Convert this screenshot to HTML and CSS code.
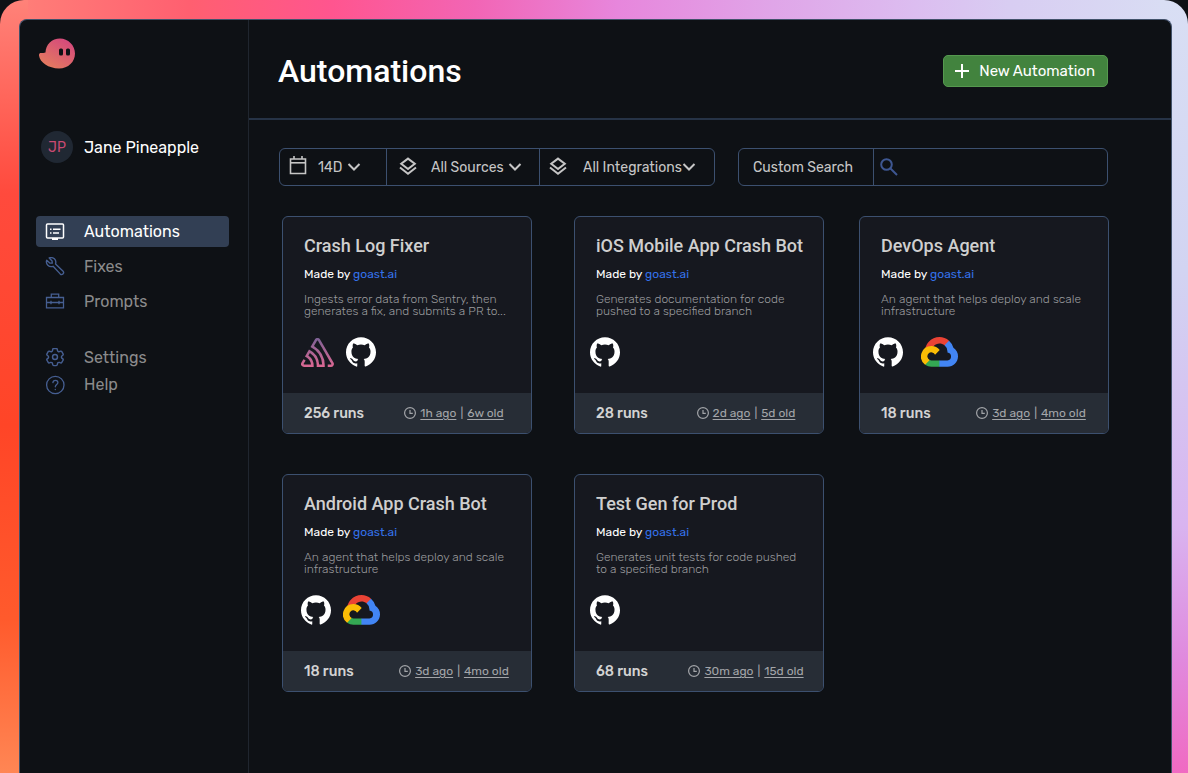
FILE: index.html
```html
<!DOCTYPE html>
<html lang="en">
<head>
    <meta charset="UTF-8">
    <meta name="viewport" content="width=device-width, initial-scale=1.0">
    <title>Automations</title>
    <link rel="stylesheet" href="styles.css">
</head>
<body>
    <svg class="sprite" aria-hidden="true">
        <defs>
            <linearGradient id="logo-fill" x1="0" y1="1" x2="0.7" y2="0">
                <stop offset="0" stop-color="#e6835a"/>
                <stop offset="1" stop-color="#d54a7c"/>
            </linearGradient>
            <linearGradient id="sentry-fill" x1="0" y1="0" x2="0" y2="1">
                <stop offset="0" stop-color="#7d6296"/>
                <stop offset="1" stop-color="#dc6792"/>
            </linearGradient>
        </defs>
        <symbol id="github" viewBox="0 0 24 24">
            <path fill="#fff" d="M12 .297c-6.63 0-12 5.373-12 12 0 5.303 3.438 9.8 8.205 11.385.6.113.82-.258.82-.577 0-.285-.01-1.04-.015-2.04-3.338.724-4.042-1.61-4.042-1.61C4.422 18.07 3.633 17.7 3.633 17.7c-1.087-.744.084-.729.084-.729 1.205.084 1.838 1.236 1.838 1.236 1.07 1.835 2.809 1.305 3.495.998.108-.776.417-1.305.76-1.605-2.665-.3-5.466-1.332-5.466-5.93 0-1.31.465-2.38 1.235-3.22-.135-.303-.54-1.523.105-3.176 0 0 1.005-.322 3.3 1.23.96-.267 1.98-.399 3-.405 1.02.006 2.04.138 3 .405 2.28-1.552 3.285-1.23 3.285-1.23.645 1.653.24 2.873.12 3.176.765.84 1.23 1.91 1.23 3.22 0 4.61-2.805 5.625-5.475 5.92.42.36.81 1.096.81 2.22 0 1.606-.015 2.896-.015 3.286 0 .315.21.69.825.57C20.565 22.092 24 17.592 24 12.297c0-6.627-5.373-12-12-12"/>
        </symbol>
        <symbol id="gcp" viewBox="0 0 256 206">
            <path fill="#ea4335" d="M170.25 56.82l22.25-22.25 1.49-9.37C153.44-11.68 88.98-7.5 52.42 33.92 42.27 45.42 34.73 59.76 30.72 74.57l7.97-1.12 44.5-7.34 3.44-3.51c19.8-21.74 53.27-24.67 76.13-6.17z"/>
            <path fill="#4285f4" d="M224.2 73.92a100.25 100.25 0 0 0-30.21-48.72l-31.23 31.23a55.52 55.52 0 0 1 20.38 44.04v5.54a27.8 27.8 0 0 1 0 55.28h-55.68l-5.46 5.93v33.34l5.46 5.24h55.68c39.93.3 72.55-31.5 72.86-71.43a72.32 72.32 0 0 0-31.8-60.45"/>
            <path fill="#34a853" d="M71.87 205.8h55.59v-44.51H71.87a27.28 27.28 0 0 1-11.4-2.5l-7.89 2.42-22.4 22.25-1.96 7.58a72 72 0 0 0 43.65 14.76"/>
            <path fill="#fbbc05" d="M71.87 61.43A72.3 72.3 0 0 0 28.22 191.04l32.25-32.25a27.8 27.8 0 1 1 36.78-36.77l32.24-32.25a72.22 72.22 0 0 0-57.62-28.34"/>
        </symbol>
        <symbol id="clock" viewBox="0 0 12 12">
            <path fill="none" stroke="currentColor" stroke-width="1.200" d="M6 .6a5.400 5.400 0 1 1 0 10.800a5.400 5.400 0 0 1 0-10.800M6 3v3.400h2.800"/>
        </symbol>
        <symbol id="chevron" viewBox="0 0 14 14">
            <path fill="none" stroke="currentColor" stroke-width="2" d="M1.500 4l5.500 5.500L12.500 4"/>
        </symbol>
        <symbol id="layers" viewBox="0 0 18 18">
            <path fill="none" stroke="currentColor" stroke-width="2" d="M9 1.600l6.800 5.200L9 12.100 2.200 6.800zM1 10.500l8 6.200 8-6.200"/>
        </symbol>
    </svg>

    <div class="frame">
        <div class="app">
            <aside class="sidebar">
                <svg class="logo" viewBox="0 0 36 31">
                    <path fill="url(#logo-fill)" d="M6.500 14.600C6.600 6.600 13 .5 21 .5s15 6.700 15 15-6.700 15-16 15C9.500 30.500.8 24.500 0 17.600c-.1-2 .7-2.700 2-2.700 1.800 0 3 .3 4.500-.3z"/>
                    <rect fill="#0e1115" x="20" y="10.500" width="4" height="7" rx="1.500"/>
                    <rect fill="#0e1115" x="27" y="10.500" width="4" height="7" rx="1.500"/>
                </svg>

                <div class="user">
                    <span class="avatar">JP</span>
                    <span>Jane Pineapple</span>
                </div>

                <nav class="nav">
                    <a class="nav-item active" href="#">
                        <svg viewBox="0 0 20 20" fill="none" stroke="currentColor"><rect x="1.500" y="2" width="17" height="14" rx="1" stroke-width="1.500"/><path stroke-width="1.500" d="M5 7.200h1.500M8 7.200h7.500M5 11h1.500M8 11h6"/><path stroke-width="2" d="M7 17h6"/></svg>
                        Automations
                    </a>
                    <a class="nav-item" href="#">
                        <svg viewBox="1 2 22 22" fill="none" stroke="currentColor" stroke-width="1.500" stroke-linejoin="round"><path transform="matrix(-1 0 0 1 24 0)" d="M15.200 6.400l-.2 2.300 2.500.1 3.600-3.200c1.500 4.200-2.500 8.300-7 6.600L6.300 20.600c-2 2-5-.7-3.200-3l8.300-8C10 5 13.800 1.600 18.400 3z"/></svg>
                        Fixes
                    </a>
                    <a class="nav-item" href="#">
                        <svg viewBox="0 0 20 20" fill="none" stroke="currentColor" stroke-width="1.300"><path d="M1.500 5.500h17v10.300h-17zM6.300 5.500V2.200h7.400v3.300M1.500 10.500h17M6 8.800v3.400M14 8.800v3.400"/></svg>
                        Prompts
                    </a>
                    <a class="nav-item small first" href="#">
                        <svg viewBox="1.500 2.500 21 21" fill="none" stroke="currentColor" stroke-width="1.500" stroke-linecap="round" stroke-linejoin="round"><path d="M9.594 3.940c.09-.542.560-.940 1.110-.940h2.593c.55 0 1.020.398 1.110.940l.213 1.281c.063.374.313.686.645.870.074.040.147.083.220.127.325.196.720.257 1.075.124l1.217-.456a1.125 1.125 0 0 1 1.370.490l1.296 2.247a1.125 1.125 0 0 1-.260 1.431l-1.003.827c-.293.241-.438.613-.430.992a7 7 0 0 1 0 .255c-.008.378.137.750.430.991l1.004.827c.424.350.534.955.260 1.430l-1.298 2.247a1.125 1.125 0 0 1-1.369.491l-1.217-.456c-.355-.133-.750-.072-1.076.124a6 6 0 0 1-.220.128c-.331.183-.581.495-.644.869l-.213 1.281c-.090.543-.560.940-1.110.940h-2.594c-.550 0-1.019-.398-1.110-.940l-.213-1.281c-.062-.374-.312-.686-.644-.870a6 6 0 0 1-.220-.127c-.325-.196-.720-.257-1.076-.124l-1.217.456a1.125 1.125 0 0 1-1.369-.490l-1.297-2.247a1.125 1.125 0 0 1 .260-1.431l1.004-.827c.292-.240.437-.613.430-.991a7 7 0 0 1 0-.255c.007-.380-.138-.751-.430-.992l-1.004-.827a1.125 1.125 0 0 1-.260-1.430l1.297-2.247a1.125 1.125 0 0 1 1.370-.491l1.216.456c.356.133.751.072 1.076-.124.072-.044.146-.086.220-.128.332-.183.582-.495.644-.869z"/><circle cx="12" cy="12" r="2.600"/></svg>
                        Settings
                    </a>
                    <a class="nav-item small" href="#">
                        <svg viewBox="0 0 20 20" fill="none" stroke="currentColor" stroke-width="1.300" stroke-linecap="round"><circle cx="10.300" cy="10" r="8.700"/><path d="M7.900 7.600c.2-3.100 5-3 5 0 0 1.900-2.500 1.900-2.600 4.200M10.300 14.300v.3"/></svg>
                        Help
                    </a>
                </nav>
            </aside>

            <main class="main">
                <header class="header">
                    <h1>Automations</h1>
                    <button class="new-btn" type="button">
                        <svg viewBox="0 0 14 14"><path stroke="#fff" stroke-width="2" d="M7 0v14M0 7h14"/></svg>
                        New Automation
                    </button>
                </header>

                <div class="toolbar">
                    <div class="filters">
                        <label class="filter">
                            <svg class="filter-icon" viewBox="0 0 18 18" fill="none" stroke="currentColor"><path stroke-width="1.600" d="M1.500 2h15v14.500h-15zM5 2V-1M13 2V-1"/><path stroke-width="1.600" d="M1.500 5.800h15"/></svg>
                            <select class="filter-select" aria-label="Period"><option>14D</option></select>
                            <svg class="chevron"><use href="#chevron"/></svg>
                        </label>
                        <label class="filter wide">
                            <svg class="filter-icon"><use href="#layers"/></svg>
                            <select class="filter-select" aria-label="Sources"><option>All Sources</option></select>
                            <svg class="chevron"><use href="#chevron"/></svg>
                        </label>
                        <label class="filter widest">
                            <svg class="filter-icon"><use href="#layers"/></svg>
                            <select class="filter-select" aria-label="Integrations"><option>All Integrations</option></select>
                            <svg class="chevron"><use href="#chevron"/></svg>
                        </label>
                    </div>
                    <div class="search">
                        <label class="search-label" for="search">Custom Search</label>
                        <svg class="search-icon" viewBox="0 0 18 18" fill="none" stroke="currentColor" stroke-width="2"><circle cx="6.500" cy="6.500" r="5.300"/><path d="M10.500 10.500l6.500 6.500"/></svg>
                        <input class="search-input" id="search" type="text">
                    </div>
                </div>

                <section class="cards">
                    <article class="card">
                        <div class="card-body">
                            <h2>Crash Log Fixer</h2>
                            <p class="author">Made by <a href="#">goast.ai</a></p>
                            <p class="desc">Ingests error data from Sentry, then generates a fix, and submits a PR to...</p>
                        </div>
                        <div class="tools indent">
                            <svg class="sentry" viewBox="0 1.400 24 21.200"><path fill="url(#sentry-fill)" d="M13.910 2.505c-.873-1.448-2.972-1.448-3.844 0L6.904 7.920a15.478 15.478 0 0 1 8.530 12.811h-2.221A13.301 13.301 0 0 0 5.784 9.814l-2.926 5.060a7.650 7.650 0 0 1 4.435 5.848H2.194a.365.365 0 0 1-.298-.534l1.413-2.402a5.160 5.160 0 0 0-1.614-.913L.296 19.275a2.182 2.182 0 0 0 .812 2.999 2.240 2.240 0 0 0 1.086.288h6.983a9.322 9.322 0 0 0-3.845-8.318l1.110-1.922a11.470 11.470 0 0 1 4.950 10.240h5.915a17.242 17.242 0 0 0-7.885-15.280l2.244-3.845a.370.370 0 0 1 .504-.130c.255.140 9.750 16.708 9.928 16.900a.365.365 0 0 1-.327.543h-2.287c.029.612.029 1.223 0 1.831h2.297a2.206 2.206 0 0 0 1.922-3.310z"/></svg>
                            <svg class="github"><use href="#github"/></svg>
                        </div>
                        <div class="card-footer">
                            <strong>256 runs</strong>
                            <div class="times"><svg><use href="#clock"/></svg><u>1h ago</u><span>|</span><u>6w old</u></div>
                        </div>
                    </article>

                    <article class="card">
                        <div class="card-body">
                            <h2>iOS Mobile App Crash Bot</h2>
                            <p class="author">Made by <a href="#">goast.ai</a></p>
                            <p class="desc">Generates documentation for code pushed to a specified branch</p>
                        </div>
                        <div class="tools">
                            <svg class="github"><use href="#github"/></svg>
                        </div>
                        <div class="card-footer">
                            <strong>28 runs</strong>
                            <div class="times"><svg><use href="#clock"/></svg><u>2d ago</u><span>|</span><u>5d old</u></div>
                        </div>
                    </article>

                    <article class="card">
                        <div class="card-body">
                            <h2>DevOps Agent</h2>
                            <p class="author">Made by <a href="#">goast.ai</a></p>
                            <p class="desc">An agent that helps deploy and scale infrastructure</p>
                        </div>
                        <div class="tools spaced">
                            <svg class="github"><use href="#github"/></svg>
                            <svg class="gcp"><use href="#gcp"/></svg>
                        </div>
                        <div class="card-footer">
                            <strong>18 runs</strong>
                            <div class="times"><svg><use href="#clock"/></svg><u>3d ago</u><span>|</span><u>4mo old</u></div>
                        </div>
                    </article>

                    <article class="card">
                        <div class="card-body">
                            <h2>Android App Crash Bot</h2>
                            <p class="author">Made by <a href="#">goast.ai</a></p>
                            <p class="desc">An agent that helps deploy and scale infrastructure</p>
                        </div>
                        <div class="tools indent">
                            <svg class="github"><use href="#github"/></svg>
                            <svg class="gcp"><use href="#gcp"/></svg>
                        </div>
                        <div class="card-footer">
                            <strong>18 runs</strong>
                            <div class="times"><svg><use href="#clock"/></svg><u>3d ago</u><span>|</span><u>4mo old</u></div>
                        </div>
                    </article>

                    <article class="card">
                        <div class="card-body">
                            <h2>Test Gen for Prod</h2>
                            <p class="author">Made by <a href="#">goast.ai</a></p>
                            <p class="desc">Generates unit tests for code pushed to a specified branch</p>
                        </div>
                        <div class="tools">
                            <svg class="github"><use href="#github"/></svg>
                        </div>
                        <div class="card-footer">
                            <strong>68 runs</strong>
                            <div class="times"><svg><use href="#clock"/></svg><u>30m ago</u><span>|</span><u>15d old</u></div>
                        </div>
                    </article>
                </section>
            </main>
        </div>
    </div>
</body>
</html>
```
FILE: styles.css
```css
* {
    box-sizing: border-box;
}
body {
    margin: 0;
    background: #0e1115;
    color: #fff;
    font-family: Rubik, Inter, "Liberation Sans", sans-serif;
    font-size: 14px;
}
h1, h2, p {
    margin: 0;
}
a {
    color: inherit;
    text-decoration: none;
}
svg {
    flex: none;
}
.sprite {
    position: absolute;
    width: 0;
    height: 0;
}

/* gradient frame around the app window */
.frame {
    display: flex;
    min-height: 100vh;
    padding: 19px 16px 0 19px;
    border-radius: 24px 24px 0 0;
    background:
        linear-gradient(to bottom, #ff8279, #ff4a3d 25%, #ff4527 55%, #ff5a2c 80%, #ff8654) left / 28px 100% no-repeat,
        linear-gradient(to bottom, #d9dff4, #d2d4f2 35%, #d9b4f0 68%, #e08ade 85%, #f06ac2) right / 28px 100% no-repeat,
        linear-gradient(to right, #ff8279, #ff5f70 16%, #ff558f 28%, #f265b5 40%, #e786dc 52%, #e0a5e8 65%, #dcbdf0 77%, #d8cdf2 85%, #d9dff4);
}
.app {
    display: flex;
    flex: 1;
    min-width: 0;
    border: 1px solid #42526b;
    border-bottom: 0;
    border-radius: 8px 8px 0 0;
    background: #0e1115;
}

.sidebar {
    flex: none;
    width: 229px;
    padding: 18px 19px 0 16px;
    border-right: 1px solid #20262f;
}
.logo {
    display: block;
    width: 36px;
    height: 31px;
    margin-left: 3px;
}
.user {
    display: flex;
    align-items: center;
    gap: 11px;
    margin: 62px 0 53px 5px;
    font-size: 16px;
}
.avatar {
    display: flex;
    align-items: center;
    justify-content: center;
    width: 32px;
    height: 32px;
    border-radius: 50%;
    background: #202833;
    color: #c84a72;
    font-size: 14px;
}
.nav {
    display: flex;
    flex-direction: column;
}
.nav-item {
    display: flex;
    align-items: center;
    gap: 19px;
    height: 31px;
    margin-bottom: 4px;
    padding-left: 9px;
    border-radius: 4px;
    color: #8b8b8c;
    font-size: 16px;
}
.nav-item svg {
    width: 20px;
    height: 20px;
    color: #465f92;
}
.nav-item.active {
    background: #323f54;
    color: #fff;
}
.nav-item.active svg {
    color: #fff;
}
.nav-item.small {
    height: 27px;
    margin-bottom: 0;
}
.nav-item.first {
    margin-top: 23px;
}

.main {
    flex: 1;
    min-width: 0;
}
.header {
    display: flex;
    align-items: center;
    justify-content: space-between;
    height: 100px;
    padding: 3px 63px 0 29px;
    border-bottom: 2px solid #263346;
}
.header h1 {
    font-family: Roboto, sans-serif;
    font-size: 32px;
    font-weight: 500;
    line-height: 40px;
}
.new-btn {
    display: flex;
    align-items: center;
    gap: 10px;
    height: 32px;
    padding: 0 12px 0 11px;
    border: 1px solid #55994f;
    border-radius: 5px;
    background: #42833e;
    color: #fff;
    font-family: inherit;
    font-size: 15px;
    cursor: pointer;
}
.new-btn svg {
    width: 14px;
    height: 14px;
}

.toolbar {
    display: flex;
    gap: 23px;
    padding: 28px 63px 30px 30px;
    color: #c6c6c6;
}
.filters, .search {
    display: flex;
    height: 38px;
    border: 1px solid #3c506f;
    border-radius: 6px;
}
.filters {
    flex: none;
}
.filter {
    display: flex;
    align-items: center;
    width: 106px;
    padding-left: 9px;
}
.filter + .filter {
    border-left: 1px solid #3c506f;
}
.filter.wide {
    width: 153px;
    padding-left: 12px;
}
.filter.widest {
    width: 175px;
    padding-left: 9px;
}
.filter-icon {
    width: 18px;
    height: 18px;
    margin: 0 11px 2px 0;
    overflow: visible;
}
.wide .filter-icon {
    margin-right: 14px;
}
.widest .filter-icon {
    margin-right: 16px;
}
.filter-select {
    appearance: none;
    margin: 0;
    padding: 0;
    border: 0;
    background: none;
    color: inherit;
    font-family: inherit;
    font-size: 14px;
    outline: none;
}
.chevron {
    width: 14px;
    height: 14px;
    margin-left: 4px;
    pointer-events: none;
}
.widest .chevron {
    margin-left: 0;
}
.search {
    flex: 1;
    align-items: center;
    min-width: 0;
}
.search-label {
    display: flex;
    align-items: center;
    align-self: stretch;
    flex: none;
    width: 135px;
    padding-left: 14px;
    border-right: 1px solid #3c506f;
}
.search-icon {
    width: 18px;
    height: 18px;
    margin-left: 6px;
    color: #3e5792;
}
.search-input {
    flex: 1;
    min-width: 0;
    height: 34px;
    padding: 0 8px;
    border: 0;
    background: none;
    color: inherit;
    font: inherit;
    outline: none;
}

.cards {
    display: grid;
    grid-template-columns: 292fr 285fr 250fr;
    row-gap: 40px;
    padding: 0 62px 40px 33px;
}
.card {
    display: flex;
    flex-direction: column;
    width: 250px;
    height: 218px;
    overflow: hidden;
    border: 1px solid #3c506f;
    border-radius: 6px;
    background: #16181f;
}
.card-body {
    padding: 18px 16px 0 21px;
}
.card h2 {
    color: #cfcfcf;
    font-family: Roboto, sans-serif;
    font-size: 18px;
    font-weight: 500;
    line-height: 22px;
    white-space: nowrap;
}
.author {
    margin-top: 9px;
    font-size: 12px;
    line-height: 16px;
}
.author a {
    color: #3471e8;
}
.desc {
    margin-top: 11px;
    color: #9a9b9e;
    font-size: 12px;
    font-weight: 300;
    line-height: 12px;
}
.tools {
    display: flex;
    align-items: center;
    gap: 12px;
    margin-top: 20px;
    padding-left: 15px;
}
.tools.indent {
    padding-left: 18px;
}
.tools.spaced {
    align-items: flex-end;
    gap: 18px;
    padding-left: 13px;
}
.github {
    width: 30px;
    height: 30px;
}
.sentry {
    width: 33px;
    height: 29px;
}
.gcp {
    width: 37px;
    height: 30px;
}
.card-footer {
    display: grid;
    grid-template-columns: 88px 1fr;
    align-items: center;
    height: 40px;
    margin-top: auto;
    padding: 0 15px 0 21px;
    background: #272d36;
}
.card-footer strong {
    color: #d3d3d3;
    font-size: 14px;
    font-weight: 500;
    white-space: nowrap;
}
.times {
    display: flex;
    align-items: center;
    justify-content: center;
    gap: 4px;
    color: #a3a5a9;
    font-size: 12px;
    white-space: nowrap;
}
.times svg {
    width: 12px;
    height: 12px;
}
.times u {
    text-underline-offset: 2px;
}
```
